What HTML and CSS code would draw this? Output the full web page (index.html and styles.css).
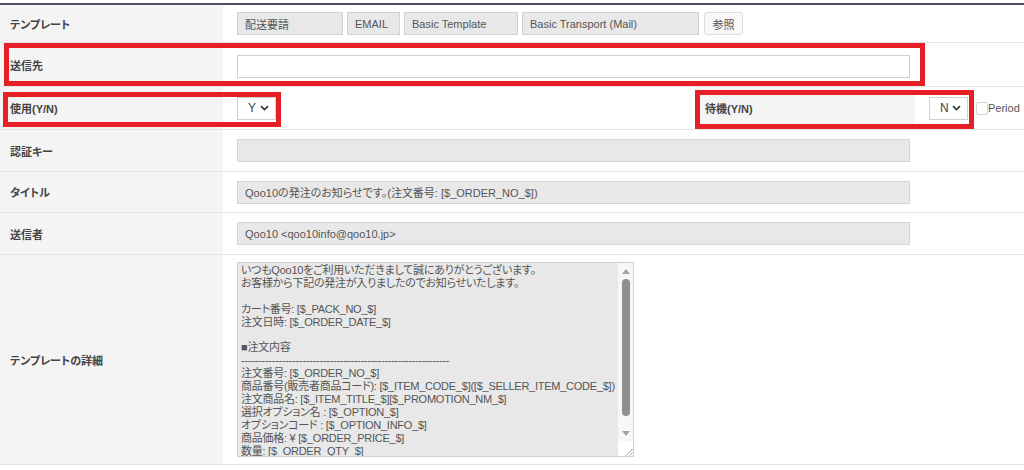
FILE: index.html
```html
<!DOCTYPE html>
<html lang="ja">
<head>
    <meta charset="UTF-8">
    <meta name="viewport" content="width=device-width, initial-scale=1.0">
    <title>テンプレート設定</title>
    <link rel="stylesheet" href="styles.css">
</head>
<body>
    <div class="sheet">
        <div class="row row-template">
            <div class="label">テンプレート</div>
            <div class="cell">
                <span class="box box-type">配送要請</span>
                <span class="box box-kind">EMAIL</span>
                <span class="box box-tpl">Basic Template</span>
                <span class="box box-transport">Basic Transport (Mail)</span>
                <button class="ref-btn">参照</button>
            </div>
        </div>

        <div class="row row-dest">
            <div class="label">送信先</div>
            <div class="cell">
                <input class="text-input" type="text" value="">
            </div>
        </div>

        <div class="row row-use">
            <div class="label">使用(Y/N)</div>
            <div class="cell">
                <div class="select-box">
                    <span>Y</span>
                    <svg width="9" height="6" viewBox="0 0 9 6"><path d="M1 1.2 L4.5 4.6 L8 1.2" fill="none" stroke="#333" stroke-width="1.7"/></svg>
                </div>
            </div>
            <div class="label">待機(Y/N)</div>
            <div class="cell">
                <div class="select-box">
                    <span>N</span>
                    <svg width="9" height="6" viewBox="0 0 9 6"><path d="M1 1.2 L4.5 4.6 L8 1.2" fill="none" stroke="#333" stroke-width="1.7"/></svg>
                </div>
            </div>
            <div class="cell cell-period">
                <input class="check" type="checkbox" id="period">
                <label for="period">Period</label>
            </div>
        </div>

        <div class="row row-key">
            <div class="label">認証キー</div>
            <div class="cell">
                <input class="text-input readonly" type="text" value="" readonly>
            </div>
        </div>

        <div class="row row-title">
            <div class="label">タイトル</div>
            <div class="cell">
                <input class="text-input readonly" type="text" value="Qoo10の発注のお知らせです。(注文番号: [$_ORDER_NO_$])" readonly>
            </div>
        </div>

        <div class="row row-sender">
            <div class="label">送信者</div>
            <div class="cell">
                <input class="text-input readonly" type="text" value="Qoo10 <qoo10info@qoo10.jp>" readonly>
            </div>
        </div>

        <div class="row row-detail">
            <div class="label">テンプレートの詳細</div>
            <div class="cell">
                <div class="detail-wrap">
<textarea class="detail" readonly>いつもQoo10をご利用いただきまして誠にありがとうございます。
お客様から下記の発注が入りましたのでお知らせいたします。

カート番号: [$_PACK_NO_$]
注文日時: [$_ORDER_DATE_$]

■注文内容
-------------------------------------------------------------
注文番号: [$_ORDER_NO_$]
商品番号(販売者商品コード): [$_ITEM_CODE_$]([$_SELLER_ITEM_CODE_$])
注文商品名: [$_ITEM_TITLE_$][$_PROMOTION_NM_$]
選択オプション名 : [$_OPTION_$]
オプションコード : [$_OPTION_INFO_$]
商品価格: ¥ [$_ORDER_PRICE_$]
数量: [$_ORDER_QTY_$]
-------------------------------------------------------------
</textarea>
                    <div class="scrollbar">
                        <span class="sb-btn"><i class="arrow-up"></i></span>
                        <span class="sb-track"><span class="sb-thumb"></span></span>
                        <span class="sb-btn"><i class="arrow-down"></i></span>
                        <span class="sb-grip">
                            <svg width="9" height="9" viewBox="0 0 9 9"><path d="M8.5 2 L2 8.5 M8.5 5.5 L5.5 8.5" stroke="#999" stroke-width="1"/></svg>
                        </span>
                    </div>
                </div>
            </div>
        </div>

        <!-- 赤枠 -->
        <div class="mark mark-dest"></div>
        <div class="mark mark-use"></div>
        <div class="mark mark-wait"></div>
    </div>
</body>
</html>
```

FILE: styles.css
```css
body {
    margin: 0;
    font-family: "Liberation Sans", "Noto Sans CJK JP", sans-serif;
    font-feature-settings: "palt";
    font-size: 11px;
    color: #555;
    background-color: #fff;
}

.sheet {
    position: relative;
    padding-top: 3px;
}

.row {
    display: grid;
    grid-template-columns: 223px 1fr;
    border-bottom: 1px solid #e4e4e4;
    box-sizing: border-box;
}

.row-template {
    border-top: 2px solid #4b5264;
    height: 40px;
}

.row-dest { height: 44px; }
.row-use {
    height: 43px;
    grid-template-columns: 223px 472px 220px 60px 1fr;
}
.row-key { height: 42px; }
.row-title { height: 41px; }
.row-sender { height: 42px; }
.row-detail { height: 210px; }

.label {
    display: flex;
    align-items: center;
    padding-left: 10px;
    background-color: #f4f4f4;
    font-weight: bold;
    color: #444;
}

.cell {
    display: flex;
    align-items: center;
    gap: 4px;
    padding-left: 14px;
}

.row-dest .cell {
    padding-top: 4px;
}

.box {
    height: 23px;
    box-sizing: border-box;
    display: flex;
    align-items: center;
    padding-left: 7px;
    background-color: #e8e8e8;
    border: 1px solid #d2d2d2;
    color: #555;
}

.box-type { width: 106px; }
.box-kind { width: 53px; }
.box-tpl { width: 114px; }
.box-transport { width: 177px; }

.ref-btn {
    width: 39px;
    height: 23px;
    margin-left: 1px;
    padding: 0;
    font-family: inherit;
    font-size: 11px;
    color: #555;
    background-color: #f8f8f8;
    border: 1px solid #dcdcdc;
    border-radius: 3px;
}

.text-input {
    width: 673px;
    height: 23px;
    box-sizing: border-box;
    padding: 0 7px;
    margin: 0;
    font-family: inherit;
    font-feature-settings: "palt";
    font-size: 11px;
    color: #555;
    background-color: #fff;
    border: 1px solid #cfcfcf;
    outline: none;
}

.text-input.readonly {
    background-color: #e8e8e8;
    border-color: #d4d4d4;
}

.select-box {
    width: 39px;
    height: 23px;
    box-sizing: border-box;
    display: flex;
    align-items: center;
    justify-content: space-between;
    padding: 0 6px 0 10px;
    background-color: #fff;
    border: 1px solid #d0d0d0;
    color: #444;
    font-size: 12px;
}

.cell-period {
    padding-left: 1px;
    gap: 0;
}

.check {
    appearance: none;
    width: 12px;
    height: 13px;
    margin: 0;
    background-color: #fff;
    border: 1px solid #d6d6d6;
    border-radius: 2px;
}

.cell-period label {
    color: #555;
}

.row-detail .cell {
    align-items: flex-start;
    padding-top: 7px;
}

.detail-wrap {
    display: flex;
    width: 397px;
    height: 195px;
    box-sizing: border-box;
    background-color: #e8e8e8;
    border: 1px solid #cfcfcf;
}

.detail {
    flex: 1;
    min-width: 0;
    margin: 0;
    padding: 1px 3px;
    font-family: inherit;
    font-feature-settings: "palt";
    font-size: 11px;
    line-height: 12.9px;
    letter-spacing: -0.25px;
    color: #555;
    background-color: transparent;
    border: none;
    outline: none;
    overflow: hidden;
    resize: none;
    white-space: pre;
}

.scrollbar {
    width: 15px;
    display: flex;
    flex-direction: column;
    background-color: #f7f7f7;
}

.sb-btn {
    height: 16px;
    display: flex;
    align-items: center;
    justify-content: center;
}

.arrow-up,
.arrow-down {
    width: 0;
    height: 0;
    border-left: 4px solid transparent;
    border-right: 4px solid transparent;
}

.arrow-up {
    border-bottom: 5px solid #a3a3a3;
}

.arrow-down {
    border-top: 5px solid #a3a3a3;
}

.sb-track {
    flex: 1;
    display: flex;
    justify-content: center;
}

.sb-thumb {
    width: 8px;
    height: 137px;
    background-color: #8f8f8f;
    border-radius: 4px;
}

.sb-grip {
    height: 15px;
    display: flex;
    align-items: flex-end;
    justify-content: flex-end;
    background-color: #fff;
}

.mark {
    position: absolute;
    box-sizing: border-box;
    border: 5px solid #e61e25;
}

.mark-dest {
    left: 4px;
    top: 43px;
    width: 921px;
    height: 43px;
}

.mark-use {
    left: 3px;
    top: 92px;
    width: 278px;
    height: 35px;
}

.mark-wait {
    left: 695px;
    top: 90px;
    width: 279px;
    height: 39px;
}
```
